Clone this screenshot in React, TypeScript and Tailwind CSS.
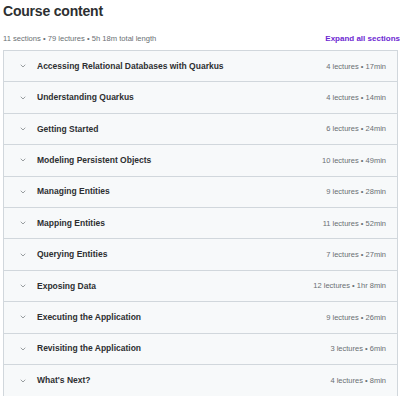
import { ChevronDown } from "lucide-react";

const sections = [
  { title: "Accessing Relational Databases with Quarkus", meta: "4 lectures • 17min" },
  { title: "Understanding Quarkus", meta: "4 lectures • 14min" },
  { title: "Getting Started", meta: "6 lectures • 24min" },
  { title: "Modeling Persistent Objects", meta: "10 lectures • 49min" },
  { title: "Managing Entities", meta: "9 lectures • 28min" },
  { title: "Mapping Entities", meta: "11 lectures • 52min" },
  { title: "Querying Entities", meta: "7 lectures • 27min" },
  { title: "Exposing Data", meta: "12 lectures • 1hr 8min" },
  { title: "Executing the Application", meta: "9 lectures • 26min" },
  { title: "Revisiting the Application", meta: "3 lectures • 6min" },
  { title: "What's Next?", meta: "4 lectures • 8min" },
];

export default function App() {
  return (
    <div className="w-[400px] h-[396px] overflow-hidden bg-white pl-[3px] font-['Liberation_Sans',sans-serif] text-[#2d2f31]">
      {/* Header */}
      <h2 className="text-[14px] font-bold leading-[20px] pt-[1px] tracking-[-0.2px]">Course content</h2>
      <div className="flex items-center justify-between mt-[12px] h-[11px]">
        <span className="text-[7.6px] text-[#6a6f73]">11 sections • 79 lectures • 5h 18m total length</span>
        <span className="text-[8px] font-bold text-[#6d28d2] whitespace-nowrap">Expand all sections</span>
      </div>

      {/* Sections */}
      <div className="mt-[6px] w-[395px] border border-[#d1d7dc]">
        {sections.map((s, i) => (
          <div
            key={s.title}
            className={`flex items-center h-[31.4px] bg-[#f7f9fa] pl-[15px] pr-[11px] ${
              i < sections.length - 1 ? "border-b border-[#d1d7dc]" : ""
            }`}
          >
            <ChevronDown className="w-[8px] h-[8px] text-[#6a6f73]" strokeWidth={2} />
            <span className="ml-[10px] text-[8.5px] font-bold">{s.title}</span>
            <span className="ml-auto text-[7.5px] text-[#6a6f73]">{s.meta}</span>
          </div>
        ))}
      </div>
    </div>
  );
}
